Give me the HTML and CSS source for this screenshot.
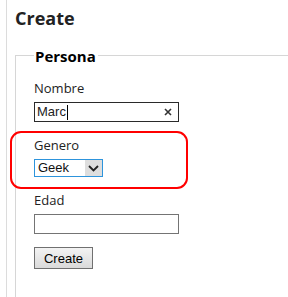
FILE: index.html
```html
<!DOCTYPE html>
<html lang="es">
<head>
<meta charset="utf-8">
<title>Create</title>
<link rel="stylesheet" href="styles.css">
</head>
<body>
<div class="page">
  <h2 class="title">Create</h2>
  <fieldset class="group">
    <legend class="group-legend">Persona</legend>

    <div class="field">
      <div class="label">Nombre</div>
      <div class="textbox textbox-focus">
        <span class="textbox-value">Marc</span><span class="caret"></span>
        <svg class="clear" width="8" height="8" viewBox="0 0 8 8" aria-hidden="true">
          <path d="M1 1L7 7M7 1L1 7" stroke="#333" stroke-width="1.6" fill="none"/>
        </svg>
      </div>
    </div>

    <div class="field field-highlighted">
      <span class="highlight" aria-hidden="true"></span>
      <div class="label">Genero</div>
      <div class="select">
        <span class="select-value">Geek</span>
        <span class="select-arrow">
          <svg width="11" height="7" viewBox="0 0 11 7" aria-hidden="true">
            <path d="M1 1L5.5 5.5L10 1" stroke="#222" stroke-width="1.8" fill="none"/>
          </svg>
        </span>
      </div>
    </div>

    <div class="field field-last">
      <div class="label">Edad</div>
      <div class="textbox textbox-plain"></div>
    </div>

    <button class="button" type="button">Create</button>
  </fieldset>
</div>
</body>
</html>
```

FILE: styles.css
```css
html, body {
  margin: 0;
  padding: 0;
  background: #fff;
  overflow: hidden;
}

body {
  font-family: "Open Sans", "DejaVu Sans", sans-serif;
  color: #222;
}

.page {
  margin-left: 6px;
  border-left: 1px solid #dcdcdc;
  min-height: 297px;
  padding-left: 8px;
  padding-top: 6px;
  box-sizing: border-box;
}

.title {
  margin: 0 0 14px 0;
  font-size: 18px;
  line-height: 24px;
  font-weight: 700;
  color: #222;
}

.group {
  margin: 0;
  min-width: 0;
  border: none;
  border-top: 1px solid #d6d6d6;
  border-left: 1px solid #d6d6d6;
  padding: 13px 0 40px 18px;
}

.group-legend {
  padding: 2px 2px 0 1px;
  font-size: 15px;
  line-height: 20px;
  font-weight: 700;
  color: #000;
}

.field {
  margin-bottom: 14px;
}

.field-last {
  margin-bottom: 13px;
}

.field-highlighted {
  position: relative;
}

.highlight {
  position: absolute;
  left: -24px;
  top: -5px;
  width: 178px;
  height: 58px;
  box-sizing: border-box;
  border: 2px solid #ff0000;
  border-radius: 11px;
}

.label {
  font-size: 13px;
  line-height: 18px;
  margin-bottom: 5px;
  color: #222;
}

.textbox {
  box-sizing: border-box;
  width: 145px;
  height: 20px;
  display: flex;
  align-items: center;
  padding: 0 6px 0 2px;
  font-family: "Liberation Sans", Arial, sans-serif;
  font-size: 13px;
  color: #222;
}

.textbox-focus {
  border: 1px solid #2a2a2a;
}

.textbox-plain {
  border: 1px solid #747474;
}

.textbox-value {
  line-height: 16px;
}

.caret {
  display: inline-block;
  width: 1px;
  height: 15px;
  background: #000;
  margin-left: 1px;
}

.clear {
  margin-left: auto;
}

.select {
  box-sizing: border-box;
  width: 69px;
  height: 18px;
  display: flex;
  border: 1px solid #2d94dc;
  font-family: "Liberation Sans", Arial, sans-serif;
  font-size: 13px;
  color: #111;
}

.select-value {
  flex: 1;
  padding-left: 3px;
  line-height: 16px;
}

.select-arrow {
  width: 17px;
  background: #dedede;
  display: flex;
  align-items: center;
  justify-content: center;
}

.button {
  display: block;
  box-sizing: border-box;
  width: 59px;
  height: 22px;
  margin: 0;
  padding: 0;
  border: 1px solid #707070;
  border-radius: 0;
  background: linear-gradient(#f3f3f3, #dadada);
  font-family: "Liberation Sans", Arial, sans-serif;
  font-size: 13px;
  color: #000;
}
```
